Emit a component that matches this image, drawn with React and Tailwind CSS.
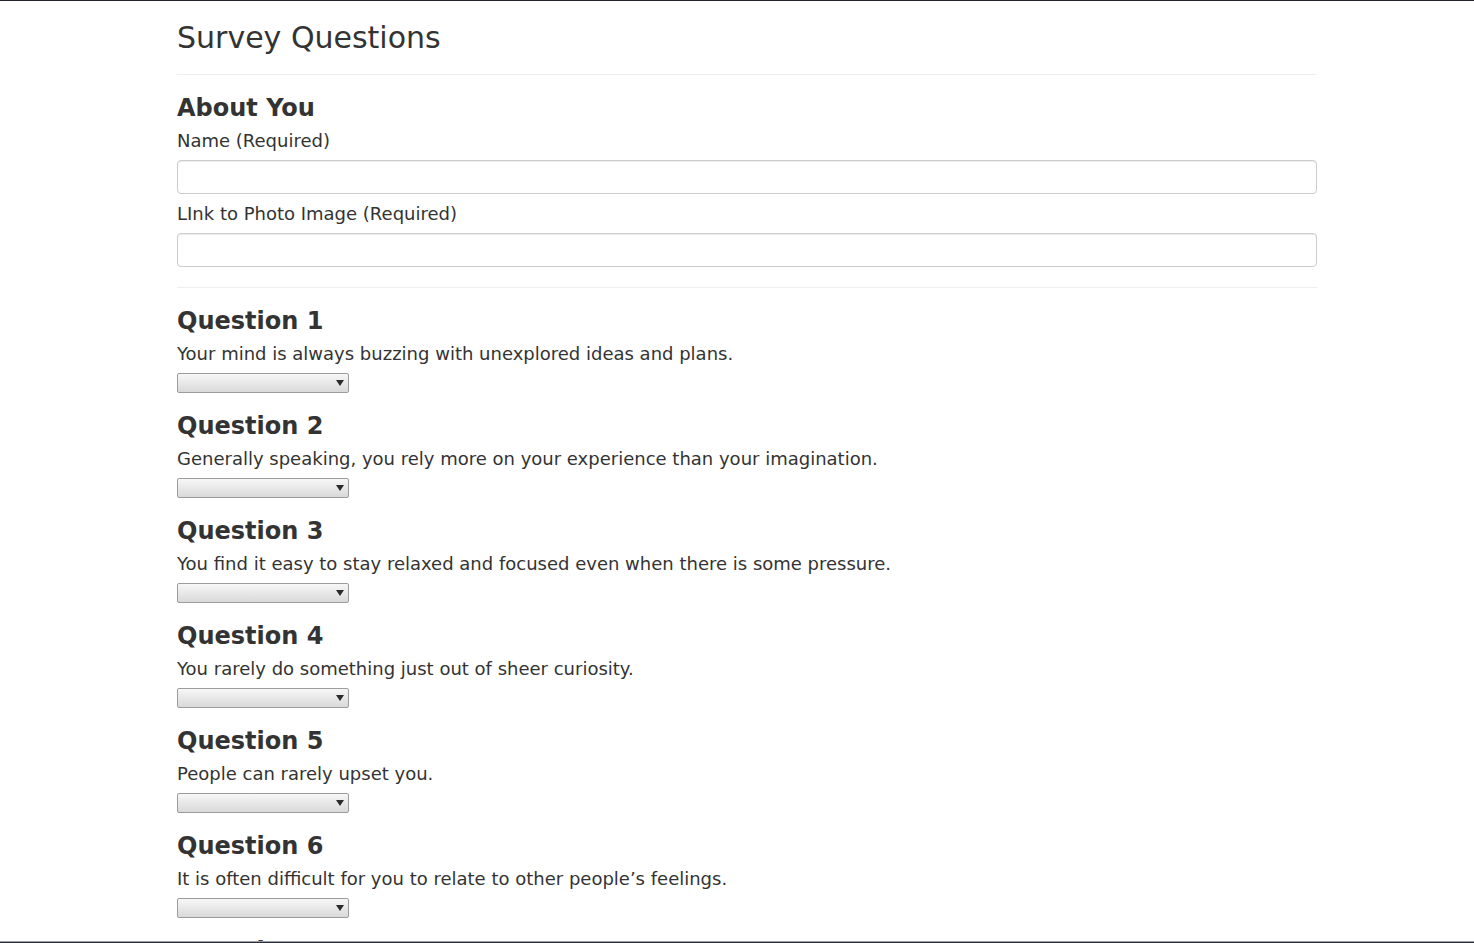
import React from 'react';

const questions = [
  'Your mind is always buzzing with unexplored ideas and plans.',
  'Generally speaking, you rely more on your experience than your imagination.',
  'You find it easy to stay relaxed and focused even when there is some pressure.',
  'You rarely do something just out of sheer curiosity.',
  'People can rarely upset you.',
  'It is often difficult for you to relate to other people\u2019s feelings.',
  'In a discussion, truth should be more important than people\u2019s sensitivities.',
  'You rarely get carried away by fantasies and ideas.',
  'You think that everyone\u2019s views should be respected regardless of whether they are supported by facts or not.',
  'You feel more energetic after spending time with a group of people.',
];

const options = ['', '1 (Strongly Disagree)', '2', '3', '4', '5 (Strongly Agree)'];

function Select() {
  return (
    <div className="relative mt-[7px] w-[172px] h-[20px]">
      <select className="appearance-none block w-full h-full border border-[#9c9c9c] rounded-[2px] bg-gradient-to-b from-[#f7f7f7] to-[#d9d9d9] text-[13px] pl-1 outline-none">
        {options.map((o) => (
          <option key={o} value={o}>{o}</option>
        ))}
      </select>
      <svg className="absolute right-[5px] top-[7px] pointer-events-none" width="8" height="6" viewBox="0 0 8 6">
        <path d="M0 0 L8 0 L4 6 Z" fill="#2b2b2b" />
      </svg>
    </div>
  );
}

export default function App() {
  return (
    <div className="min-h-screen bg-white text-[#333] font-['DejaVu_Sans',sans-serif]">
      {/* window frame lines */}
      <div className="fixed top-0 left-0 right-0 h-px bg-[#25252f] z-10" />
      <div className="fixed bottom-0 left-0 right-0 z-10">
        <div className="h-px bg-[#9a9ea6]" />
        <div className="h-px bg-[#2c2c38]" />
      </div>

      <div className="ml-[177px] w-[1140px] pb-10">
        <div className="pt-[21px] pb-[20px] border-b border-[#eee]">
          <h1 className="text-[30px] leading-[33px] font-normal">Survey Questions</h1>
        </div>

        <div className="pb-[20px] border-b border-[#eee]">
          <h3 className="mt-[20px] mb-[8px] text-[24px] leading-[26px] font-bold">About You</h3>
          <label className="block text-[18px] leading-[24px]">Name (Required)</label>
          <input className="mt-[7px] block w-full h-[34px] border border-[#ccc] rounded-[4px] shadow-[inset_0_1px_1px_rgba(0,0,0,0.075)] px-3 outline-none" />
          <label className="block mt-[8px] text-[18px] leading-[24px]">LInk to Photo Image (Required)</label>
          <input className="mt-[7px] block w-full h-[34px] border border-[#ccc] rounded-[4px] shadow-[inset_0_1px_1px_rgba(0,0,0,0.075)] px-3 outline-none" />
        </div>

        {questions.map((q, i) => (
          <div key={i}>
            <h3 className="mt-[20px] mb-[8px] text-[24px] leading-[26px] font-bold">Question {i + 1}</h3>
            <p className="text-[18px] leading-[24px]">{q}</p>
            <Select />
          </div>
        ))}

        <button className="mt-[21px] px-3 py-[6px] text-[18px] text-white bg-[#337ab7] border border-[#2e6da4] rounded-[4px]">
          Submit
        </button>
      </div>
    </div>
  );
}
